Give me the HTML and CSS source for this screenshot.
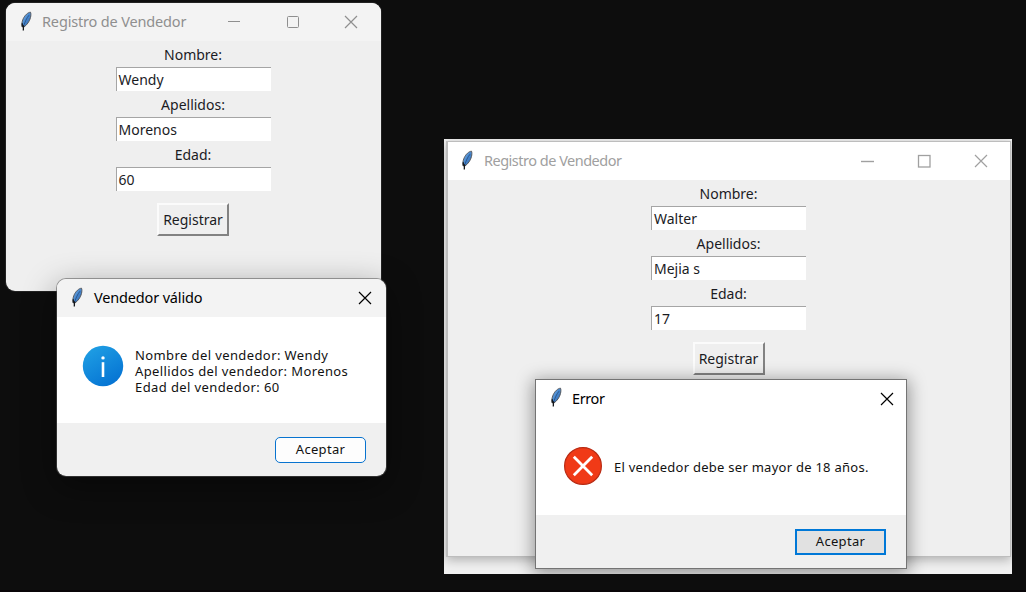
FILE: index.html
```
<!DOCTYPE html>
<html lang="es">
<head>
<meta charset="utf-8">
<title>Registro de Vendedor</title>
<link rel="stylesheet" href="styles.css">
</head>
<body>
<svg width="0" height="0" class="defs">
  <defs>
    <linearGradient id="quill" x1="0" y1="0" x2="1" y2="1">
      <stop offset="0" stop-color="#8fc0ee"/><stop offset=".45" stop-color="#4a8ad0"/><stop offset="1" stop-color="#2b62ab"/>
    </linearGradient>
    <linearGradient id="info" x1="0.2" y1="0" x2="0.8" y2="1">
      <stop offset="0" stop-color="#1f9fe4"/><stop offset="1" stop-color="#0471d2"/>
    </linearGradient>
    <symbol id="feather" viewBox="0 0 14 21">
      <path d="M11.5 1.2C9 1.3 5.8 4.2 4.2 7.8C2.8 11 2.4 14 3.4 16L4.7 16.2C8.2 13.7 10.6 10.4 11.5 6.5C12 4.3 12 2.3 11.5 1.2Z" fill="url(#quill)" stroke="#55585d" stroke-width="1"/>
      <path d="M10 4.2C7.6 7.2 6 10.8 4.7 14.8" fill="none" stroke="#234a7c" stroke-width=".8"/>
      <path d="M3.3 12.2V15.8M4.5 14.2L4.3 19.5" fill="none" stroke="#15171a" stroke-width="1.3"/>
    </symbol>
    <symbol id="close" viewBox="0 0 14 14"><path d="M1 1L13 13M13 1L1 13" fill="none" stroke="currentColor" stroke-width="1.2"/></symbol>
  </defs>
</svg>
<main class="desktop">
  <section class="window window-round">
    <header class="titlebar">
      <svg class="feather"><use href="#feather"/></svg>
      <h1 class="title">Registro de Vendedor</h1>
      <div class="controls">
        <svg width="14" height="14"><path d="M1 6.5H13" stroke="currentColor"/></svg>
        <svg width="14" height="14"><rect x="1.5" y="1.5" width="11" height="11" rx="1" fill="none" stroke="currentColor"/></svg>
        <svg width="14" height="14"><use href="#close"/></svg>
      </div>
    </header>
    <div class="form">
      <span class="label">Nombre:</span><div class="field">Wendy</div>
      <span class="label">Apellidos:</span><div class="field">Morenos</div>
      <span class="label">Edad:</span><div class="field">60</div>
      <div class="register">Registrar</div>
    </div>
  </section>

  <section class="dialog dialog-valid">
    <header class="titlebar">
      <svg class="feather"><use href="#feather"/></svg>
      <h2 class="title">Vendedor válido</h2>
      <svg class="dismiss" width="14" height="14"><use href="#close"/></svg>
    </header>
    <div class="message">
      <svg class="badge" width="42" height="42" viewBox="0 0 42 42"><circle cx="21" cy="21" r="20.2" fill="url(#info)"/><circle cx="21" cy="12.9" r="1.7" fill="#fff"/><path d="M21 17.2V32" stroke="#fff" stroke-width="2.6"/></svg>
      <p class="text">Nombre del vendedor: Wendy<br>Apellidos del vendedor: Morenos<br>Edad del vendedor: 60</p>
    </div>
    <footer class="actions"><div class="accept">Aceptar</div></footer>
  </section>

  <section class="capture">
    <div class="window window-square">
      <header class="titlebar">
        <svg class="feather"><use href="#feather"/></svg>
        <h1 class="title">Registro de Vendedor</h1>
        <div class="controls">
          <svg width="14" height="14"><path d="M1 7.5H14" stroke="currentColor" stroke-width="1.4"/></svg>
          <svg width="14" height="14"><rect x="1.5" y="1.5" width="11.5" height="11.5" fill="none" stroke="currentColor" stroke-width="1.3"/></svg>
          <svg width="14" height="14"><use href="#close"/></svg>
        </div>
      </header>
      <div class="form">
        <span class="label">Nombre:</span><div class="field">Walter</div>
        <span class="label">Apellidos:</span><div class="field">Mejia s</div>
        <span class="label">Edad:</span><div class="field">17</div>
        <div class="register">Registrar</div>
      </div>
    </div>
    <div class="dialog dialog-error">
      <header class="titlebar">
        <svg class="feather"><use href="#feather"/></svg>
        <h2 class="title">Error</h2>
        <svg class="dismiss" width="14" height="14"><use href="#close"/></svg>
      </header>
      <div class="message">
        <svg class="badge" width="40" height="40" viewBox="0 0 40 40"><circle cx="20" cy="20" r="18.4" fill="#f03a17" stroke="#b82b14" stroke-width="1.2"/><path d="M10.8 10.8L29.2 29.2M29.2 10.8L10.8 29.2" stroke="#fff" stroke-width="2.8"/></svg>
        <p class="text">El vendedor debe ser mayor de 18 años.</p>
      </div>
      <footer class="actions"><div class="accept">Aceptar</div></footer>
    </div>
  </section>
</main>
</body>
</html>
```
FILE: styles.css
```
* { box-sizing: border-box; }
body { margin: 0; background: #0d0d0d; font-family: "Noto Sans", "Open Sans", sans-serif; color: #1b1b1f; }
.defs { position: absolute; }
.desktop { position: relative; width: 1026px; height: 592px; overflow: hidden; border-bottom: 2px solid #090508; }
.window, .dialog, .capture { position: absolute; display: flex; flex-direction: column; }
.window { background: #efefef; }
.window-round { left: 6px; top: 3px; width: 375px; height: 288px; border-radius: 9px; overflow: hidden; box-shadow: 0 0 0 1px #222; }
.titlebar { display: flex; align-items: center; flex: none; height: 38px; padding: 0 13px; background: #f3f3f3; }
.feather { flex: none; width: 14px; height: 21px; margin-top: -2px; }
.title { margin: -2px 0 0 9px; font-weight: 400; white-space: nowrap; font-size: 14.5px; line-height: 20px; letter-spacing: -.16px; }
.controls { display: flex; gap: 44.5px; margin-left: auto; padding-right: 10px; }
.window .titlebar { color: #8f8f8f; }
.dismiss { margin-left: auto; }
.form { display: flex; flex-direction: column; align-items: center; width: 374px; font-size: 14px; line-height: 20px; white-space: nowrap; }
.label { height: 26px; padding-top: 4px; }
.label:not(:first-child) { position: relative; }
.field { display: flex; align-items: center; width: 155px; height: 24px; padding: 0 0 0 2px; background: #fff; border-top: 1px solid #a5a5a5; border-left: 1px solid #a5a5a5; }
.register { display: flex; align-items: center; justify-content: center; width: 72px; height: 33px; margin-top: 12px; border: 2px solid; border-color: #fbfbfb #828282 #828282 #fbfbfb; }
.message { display: flex; align-items: center; flex: 1; background: #fff; }
.text { margin: 0; font-size: 13px; line-height: 16px; white-space: nowrap; letter-spacing: .4px; color: #111; }
.badge { flex: none; }
.actions { display: flex; flex: none; align-items: center; justify-content: flex-end; background: #f0f0f0; padding-right: 20px; height: 53px; }
.accept { display: flex; align-items: center; justify-content: center; width: 91px; height: 26px; padding-bottom: 1px; font-size: 13px; letter-spacing: .3px; color: #111; }
.dialog-valid { left: 57px; top: 279px; width: 329px; height: 197px; border-radius: 9px; box-shadow: 0 0 0 1px #55555588, 0 10px 34px 0 #00000070; }
.dialog-valid .titlebar { border-radius: 9px 9px 0 0; padding-right: 14px; color: #000; }
.dialog-valid .title { margin-left: 10px; }
.dialog-valid .message { padding: 0 0 9px 25px; gap: 11px; }
.dialog-valid .text { padding-top: 10px; }
.dialog-valid .actions { border-radius: 0 0 9px 9px; }
.dialog-valid .accept { background: #fdfdfd; border: 1.5px solid #0873cf; border-radius: 5px; }
.capture { left: 444px; top: 139px; width: 568px; height: 435px; overflow: hidden; background: #f0f0f0; }
.window-square { left: 2px; top: 2px; width: 565px; height: 416px; border: solid #bdbdbd; border-width: 1px 1px 1px 2px; box-shadow: 0 3px 10px #00000045; }
.window-square .titlebar { background: #fff; color: #a0a0a0; padding: 0 12px 0 12px; }
.window-square .title { margin-left: 10px; letter-spacing: -.5px; }
.window-square .controls { gap: 43px; }
.window-square .form { width: 561px; }
.dialog-error { left: 91px; top: 240px; width: 372px; height: 190px; border: 1px solid #747474; box-shadow: 0 3px 16px 2px #00000060; }
.dialog-error .titlebar { background: #fff; height: 37px; padding: 0 12px 0 13px; color: #000; }
.dialog-error .title { letter-spacing: -.4px; }
.dialog-error .message { padding: 0 0 1px 27px; gap: 11px; }
.dialog-error .text { padding-top: 3px; letter-spacing: .26px; }
.dialog-error .accept { background: #e1e1e1; border: 2px solid #0078d7; }
```
